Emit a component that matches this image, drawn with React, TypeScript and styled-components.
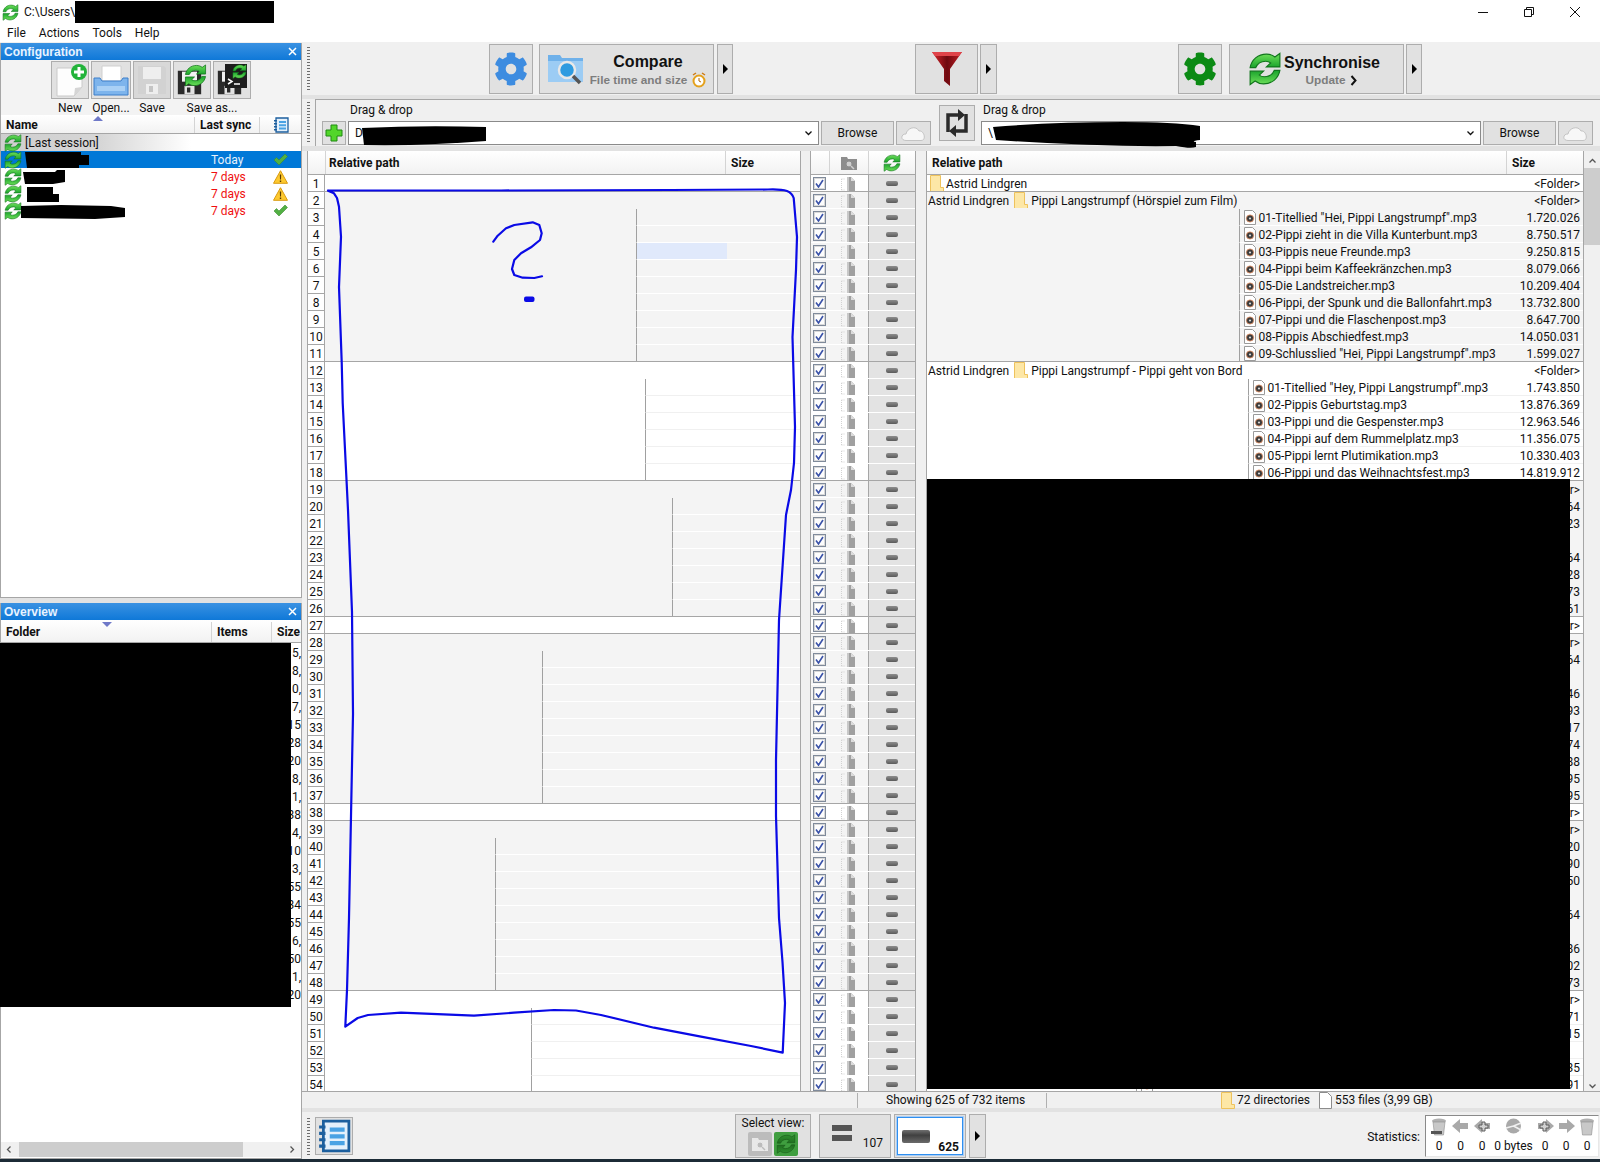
import React, { useId } from 'react';
import styled, { createGlobalStyle } from 'styled-components';
import { FaCog } from 'react-icons/fa';

const GlobalStyle = createGlobalStyle`
  * { box-sizing: border-box; }
  html, body { margin: 0; padding: 0; background: #f0f0f0; }
  body { font-family: Roboto, "Liberation Sans", sans-serif; font-size: 12px; color: #111; }
`;

const COLORS = {
  panel: '#f0f0f0',
  band: '#e2e2e2',
  line: '#a6a6a6',
  button: '#e1e1e1',
  buttonBorder: '#adadad',
  shaded: '#f4f4f4',
  blue: '#0078d7',
};

/* ---------- data ---------- */

const GROUPS = [
  { rows: 1 },
  { rows: 10, line: 637, rightLine: 1238.5 },
  { rows: 7, line: 645.5, rightLine: 1247.5 },
  { rows: 8, line: 672.5 },
  { rows: 1 },
  { rows: 10, line: 543 },
  { rows: 1 },
  { rows: 10, line: 495.5 },
  { rows: 6, line: 532, rightLine: 1136 },
];

interface GridRowData {
  n: number;
  shaded: boolean;
  groupEnd: boolean;
  line?: number;
  rightLine?: number;
}

let counter = 0;
const ROWS: GridRowData[] = GROUPS.flatMap((group, groupIndex) =>
  Array.from({ length: group.rows }, (_, i) => {
    counter += 1;
    return {
      n: counter,
      shaded: groupIndex % 2 === 1,
      groupEnd: i === group.rows - 1,
      line: i === 0 ? undefined : group.line,
      rightLine: i === 0 ? undefined : group.rightLine,
    };
  }),
);

const FOLDER = '<Folder>';

const RIGHT_CONTENT: Record<number, { name?: string; size: string; parent?: string }> = {
  1: { name: 'Astrid Lindgren', size: FOLDER },
  2: { parent: 'Astrid Lindgren', name: 'Pippi Langstrumpf (Hörspiel zum Film)', size: FOLDER },
  3: { name: '01-Titellied "Hei, Pippi Langstrumpf".mp3', size: '1.720.026' },
  4: { name: '02-Pippi zieht in die Villa Kunterbunt.mp3', size: '8.750.517' },
  5: { name: '03-Pippis neue Freunde.mp3', size: '9.250.815' },
  6: { name: '04-Pippi beim Kaffeekränzchen.mp3', size: '8.079.066' },
  7: { name: '05-Die Landstreicher.mp3', size: '10.209.404' },
  8: { name: '06-Pippi, der Spunk und die Ballonfahrt.mp3', size: '13.732.800' },
  9: { name: '07-Pippi und die Flaschenpost.mp3', size: '8.647.700' },
  10: { name: '08-Pippis Abschiedfest.mp3', size: '14.050.031' },
  11: { name: '09-Schlusslied "Hei, Pippi Langstrumpf".mp3', size: '1.599.027' },
  12: { parent: 'Astrid Lindgren', name: 'Pippi Langstrumpf - Pippi geht von Bord', size: FOLDER },
  13: { name: '01-Titellied "Hey, Pippi Langstrumpf".mp3', size: '1.743.850' },
  14: { name: '02-Pippis Geburtstag.mp3', size: '13.876.369' },
  15: { name: '03-Pippi und die Gespenster.mp3', size: '12.963.546' },
  16: { name: '04-Pippi auf dem Rummelplatz.mp3', size: '11.356.075' },
  17: { name: '05-Pippi lernt Plutimikation.mp3', size: '10.330.403' },
  18: { name: '06-Pippi und das Weihnachtsfest.mp3', size: '14.819.912' },
};

const VISIBLE_SIZES: Record<number, string> = {
  19: FOLDER, 20: '64', 21: '23', 23: '64', 24: '28', 25: '73', 26: '61', 27: FOLDER, 28: FOLDER,
  29: '64', 31: '46', 32: '93', 33: '17', 34: '74', 35: '88', 36: '95', 37: '95', 38: FOLDER,
  39: FOLDER, 40: '20', 41: '90', 42: '50', 44: '64', 46: '86', 47: '02', 48: '73', 49: FOLDER,
  50: '71', 51: '15', 53: '35', 54: '91',
};

const OVERVIEW_TAILS = ['5,', '8,', '0,', '7,', '15', '28', '20', '8,', '1,', '38', '4,', '10', '3,', '55', '34', '55', '6,', '50', '1,', '20'];

const CONFIG_ROWS = [
  { when: 'Today', selected: true, state: 'ok' },
  { when: '7 days', selected: false, state: 'warn' },
  { when: '7 days', selected: false, state: 'warn' },
  { when: '7 days', selected: false, state: 'ok' },
];

const STATS = [
  { kind: 'binBar', value: '0', width: 22 },
  { kind: 'left', value: '0', width: 21 },
  { kind: 'leftPlus', value: '0', width: 22 },
  { kind: 'pie', value: '0 bytes', width: 41 },
  { kind: 'rightPlus', value: '0', width: 22 },
  { kind: 'right', value: '0', width: 20 },
  { kind: 'bin', value: '0', width: 22 },
];

/* ---------- icons ---------- */

const SyncIcon = ({ size = 18, dark = false }: { size?: number; dark?: boolean }) => {
  const id = useId();
  const arrow = 'M1.500 11C2.500 5.500 7 1.500 13 1.500c2.500 0 4.500.8 6 2l3.500-2.500v9.500H13l3-2.800c-1-.8-2.300-1.200-3.500-1.200-3.500 0-6 2-7 4.500z';
  return (
    <svg width={size} height={size} viewBox="0 0 24 24">
      <defs>
        <linearGradient id={id} x1="0" y1="0" x2="0" y2="1">
          <stop offset="0" stopColor={dark ? '#2f8f2f' : '#6fe05a'} />
          <stop offset="1" stopColor={dark ? '#1f6f1f' : '#19a32c'} />
        </linearGradient>
      </defs>
      <g fill={`url(#${id})`} stroke={dark ? '#1a5c1a' : '#11761c'} strokeWidth=".8">
        <path d={arrow} />
        <path d={arrow} transform="rotate(180 12 12)" />
      </g>
    </svg>
  );
};

const FolderIcon = () => (
  <svg width="14" height="17" viewBox="0 0 14 17">
    <path d="M.5.5h10v12h3v4H.5z" fill="#fde7a6" stroke="#eec25c" />
  </svg>
);

const PlainFileIcon = () => (
  <svg width="13" height="17" viewBox="0 0 13 17">
    <path d="M.5.5h8l4 4v12H.5z" fill="#fff" stroke="#8c8c8c" />
  </svg>
);

const Mp3Icon = () => (
  <svg width="12" height="15" viewBox="0 0 12 15">
    <path d="M.5.5h8l3 3v11H.5z" fill="#fff" stroke="#9a9a9a" />
    <circle cx="6" cy="8.500" r="3.600" fill="#3c3c3c" stroke="#e08a5c" strokeWidth=".8" />
    <circle cx="6" cy="8.500" r="1.100" fill="#d9d9d9" />
  </svg>
);

const TickIcon = () => (
  <svg width="15" height="13" viewBox="0 0 15 13">
    <path d="M1 7l2.500-2.500L6 7l6-6 2.500 2.500L6 12z" fill="#52b043" stroke="#3a8a30" strokeWidth=".6" />
  </svg>
);

const WarnIcon = () => (
  <svg width="15" height="14" viewBox="0 0 15 14">
    <path d="M7.500.7L14.500 13.300H.5z" fill="#fdc92f" stroke="#d99a10" />
    <path d="M6.800 4.500h1.400L8 9.500H7zM6.800 10.500h1.400v1.400H6.800z" fill="#5a3a00" />
  </svg>
);

const CloudIcon = () => (
  <svg width="26" height="18" viewBox="0 0 26 18">
    <path d="M5 16.500c-6 0-5-7 0-6.500C6 4 15 1 18 7c5-1 8 9.500 2 9.500z" fill="#f7f7f7" stroke="#c4c4c4" />
  </svg>
);

const FunnelIcon = () => {
  const id = useId();
  return (
    <svg width="32" height="36" viewBox="0 0 32 36">
      <defs>
        <linearGradient id={id} x1="0" y1="0" x2="1" y2="0">
          <stop offset="0" stopColor="#d8262c" />
          <stop offset=".5" stopColor="#6e0a10" />
          <stop offset="1" stopColor="#c51c24" />
        </linearGradient>
      </defs>
      <path d="M1 1h30L19 18v17l-6-5V18z" fill={`url(#${id})`} />
      <path d="M1 1h30l-3 4H4z" fill="#e0444a" />
    </svg>
  );
};

const CompareFolderIcon = () => (
  <svg width="38" height="38" viewBox="0 0 38 38">
    <path d="M1 5h12l2 3h21v24H1z" fill="#6fb1ea" />
    <path d="M1 11h35v21H1z" fill="#9cccf4" />
    <circle cx="20" cy="20" r="8" fill="#2f9be0" stroke="#e8e8e8" strokeWidth="2.500" />
    <path d="M26 26l7 7" stroke="#555" strokeWidth="3.500" />
  </svg>
);

const ClockIcon = () => (
  <svg width="14" height="16" viewBox="0 0 14 16">
    <circle cx="7" cy="9" r="5.500" fill="#fff" stroke="#e4a11c" strokeWidth="2" />
    <path d="M7 6v3l2 1" stroke="#b36a00" fill="none" />
    <path d="M1 3l3-2M13 3l-3-2" stroke="#d07a10" strokeWidth="1.500" />
  </svg>
);

const PlusIcon = () => (
  <svg width="18" height="18" viewBox="0 0 18 18">
    <path d="M6 1h6v5h5v6h-5v5H6v-5H1V6h5z" fill="#52d62a" stroke="#1f8a10" />
  </svg>
);

const SwapIcon = () => (
  <svg width="24" height="30" viewBox="0 0 24 30">
    <path d="M3 24V7h11M21 6v17H10" fill="none" stroke="#2a2a2a" strokeWidth="3.500" />
    <path d="M13 1l7 6-7 6zM11 17l-7 6 7 6z" fill="#2a2a2a" />
  </svg>
);

const NewIcon = () => (
  <svg width="36" height="36" viewBox="0 0 36 36">
    <path d="M5 6h25v19l-8 9H5z" fill="#fdfdfd" stroke="#c9c9c9" />
    <path d="M22 34l1-8 7-1z" fill="#d5d5d5" />
    <circle cx="27" cy="10" r="8" fill="#22b33a" />
    <path d="M25.500 5h3v3.500H32v3h-3.500V15h-3v-3.500H22v-3h3.500z" fill="#fff" />
  </svg>
);

const OpenIcon = () => (
  <svg width="36" height="36" viewBox="0 0 36 36">
    <path d="M9 4h19v15H9z" fill="#fff" stroke="#cfcfcf" />
    <path d="M1 16h6l2 3h19l2-3h5v17H1z" fill="#7db4ec" stroke="#3d7fca" />
    <path d="M4 24h28v5H4z" fill="#a9d0f5" />
  </svg>
);

const DiskIcon = ({ muted = false, size = 30 }: { muted?: boolean; size?: number }) => (
  <svg width={size} height={size} viewBox="0 0 30 30">
    <path d="M1 1h26l2 2v26H1z" fill={muted ? '#d2d2d2' : '#2a2a2a'} />
    <path d="M6 2h18v12H6z" fill={muted ? '#eeeeee' : '#f2f2f2'} />
    <path d="M9 19h12v10H9z" fill={muted ? '#eeeeee' : '#e2e2e2'} />
    <path d="M12 21h4v6h-4z" fill={muted ? '#c4c4c4' : '#2a2a2a'} />
  </svg>
);

const ShellIcon = () => (
  <svg width="22" height="24" viewBox="0 0 22 24">
    <path d="M0 0h22v24H0z" fill="#1d1d1d" />
    <path d="M3 15l4 2.500L3 20" fill="none" stroke="#fff" strokeWidth="1.500" />
    <path d="M9 20h6" stroke="#fff" strokeWidth="1.500" />
  </svg>
);

const ListBookIcon = ({ size = 16 }: { size?: number }) => (
  <svg width={size} height={size} viewBox="0 0 16 16">
    <path d="M3 1h12v14H3z" fill="#e4f0fb" stroke="#1c5f9e" strokeWidth="1.300" />
    <path d="M6 4h7v2H6zM6 7.200h7v2H6zM6 10.400h7v2H6z" fill="#49a2e4" />
    <path d="M1 3h3v1.500H1zM1 6h3v1.500H1zM1 9h3v1.500H1zM1 12h3v1.500H1z" fill="#1c5f9e" />
  </svg>
);

const ScanFolderIcon = ({ fill = '#8d8d8d', glass = '#cfcfcf' }: { fill?: string; glass?: string }) => (
  <svg width="16" height="14" viewBox="0 0 16 14">
    <path d="M0 1h6l1 2h9v11H0z" fill={fill} />
    <circle cx="8" cy="8" r="3" fill={glass} stroke={fill} />
    <path d="M10 10l3 3" stroke={glass} strokeWidth="1.500" />
  </svg>
);

const GhostFileIcon = () => (
  <svg width="16" height="15" viewBox="0 0 16 15">
    <path d="M.5 3h3M.5 3v11M.5 14h3" stroke="#d2d2d2" strokeDasharray="1 1" fill="none" />
    <path d="M6 1h4l4 4v10H6z" fill="#a0a0a0" />
    <path d="M10 1l4 4h-4z" fill="#dcdcdc" />
    <path d="M6 1h2v14H6z" fill="#c8c8c8" />
  </svg>
);

const StatIcon = ({ kind }: { kind: string }) => {
  const gray = '#8e8e8e';
  switch (kind) {
    case 'bin':
    case 'binBar':
      return (
        <svg width="16" height="18" viewBox="0 0 16 18">
          <ellipse cx="8" cy="3" rx="7" ry="2.500" fill="#b0b0b0" />
          <path d="M2 4h12l-1.500 13h-9z" fill="#c8c8c8" stroke={gray} strokeWidth=".6" />
          <path d="M0 13h11v3H0z" fill={kind === 'binBar' ? '#555' : 'none'} />
        </svg>
      );
    case 'left':
    case 'leftPlus':
      return (
        <svg width="17" height="16" viewBox="0 0 17 16">
          <path d="M0 8l8-7v4h8v6H8v4z" fill="#a9a9a9" />
          {kind === 'leftPlus' && <path d="M5 7h3V4h3v3h3v3h-3v3H8v-3H5z" fill="#d2d2d2" stroke="#5c5c5c" />}
        </svg>
      );
    case 'right':
    case 'rightPlus':
      return (
        <svg width="17" height="16" viewBox="0 0 17 16">
          <path d="M17 8L9 1v4H1v6h8v4z" fill="#a9a9a9" />
          {kind === 'rightPlus' && <path d="M3 7h3V4h3v3h3v3H9v3H6v-3H3z" fill="#d2d2d2" stroke="#5c5c5c" />}
        </svg>
      );
    default:
      return (
        <svg width="17" height="16" viewBox="0 0 17 16">
          <circle cx="8.500" cy="8" r="7.500" fill="#a9a9a9" />
          <path d="M8.500 8L16 5M8.500 8L16 12M8.500 8L1 10" stroke="#f0f0f0" strokeWidth="1.500" />
        </svg>
      );
  }
};

/* ---------- layout ---------- */

const Page = styled.div`
  width: 1600px;
  height: 1162px;
  display: flex;
  flex-direction: column;
  overflow: hidden;
  background: #fff;
`;

const TitleBar = styled.div`
  height: 24px;
  display: flex;
  align-items: center;
  padding: 0 2px;
  gap: 5px;
  background: #fff;
`;

const TitleRedaction = styled.div`
  width: 199px;
  height: 22px;
  margin-left: -12px;
  background: #000;
`;

const WindowControls = styled.div`
  margin-left: auto;
  display: flex;
`;

const WindowControl = styled.div`
  width: 46px;
  height: 24px;
  display: flex;
  align-items: center;
  justify-content: center;
`;

const MenuBar = styled.div`
  height: 18px;
  display: flex;
  align-items: center;
  padding-left: 7px;
  gap: 13px;
  background: #fff;
`;

const Workspace = styled.div`
  height: 1117px;
  display: flex;
  background: ${COLORS.panel};
  border-top: 1px solid ${COLORS.panel};
`;

const Sidebar = styled.div`
  width: 302px;
  display: flex;
  flex-direction: column;
  background: ${COLORS.band};
`;

const ConfigPanel = styled.section`
  height: 555px;
  display: flex;
  flex-direction: column;
  background: #fff;
  border: 1px solid ${COLORS.line};
  border-top: 0;
`;

const OverviewPanel = styled(ConfigPanel)`
  height: 556px;
  margin-top: 5px;
`;

const DockTitle = styled.div`
  flex: none;
  height: 17px;
  display: flex;
  align-items: center;
  justify-content: space-between;
  padding: 0 4px 0 3px;
  background: linear-gradient(#3a92e2, #0f78d8);
  color: #e8f3ff;
  font-family: "Liberation Sans", sans-serif;
  font-weight: 700;
  font-size: 12px;
`;

const ConfigButtons = styled.div`
  flex: none;
  height: 55px;
  padding: 1px 0 0 50px;
  display: grid;
  grid-template-columns: 38px 40px 38px 38px 38px;
  grid-template-rows: 38px 1fr;
  column-gap: 2px;
  background: #f3f3f3;
  justify-items: center;
  align-items: center;
`;

const ConfigButton = styled.div<{ $muted?: boolean }>`
  position: relative;
  width: 100%;
  height: 38px;
  display: flex;
  align-items: center;
  justify-content: center;
  background: ${(p) => (p.$muted ? '#d8d8d8' : COLORS.button)};
  border: 1px solid ${COLORS.buttonBorder};
`;

const DiskBase = styled.div`
  position: absolute;
  left: 3px;
  bottom: 3px;
  display: flex;
`;

const DiskBadge = styled.div`
  position: absolute;
  right: 3px;
  top: 2px;
  display: flex;
`;

const ConfigLabel = styled.span<{ $wide?: boolean }>`
  grid-column: ${(p) => (p.$wide ? 'span 2' : 'auto')};
  padding-top: 2px;
  font-size: 12px;
  white-space: nowrap;
`;

const ColumnHeaderRow = styled.div<{ $height: number; $top?: number }>`
  position: relative;
  flex: none;
  height: ${(p) => p.$height}px;
  padding-top: ${(p) => p.$top ?? 0}px;
  display: flex;
  background: linear-gradient(#fff, #f2f2f2);
  border-bottom: 1px solid ${COLORS.line};
`;

const ColumnHead = styled.div<{ $width?: number; $pad?: number; $center?: boolean }>`
  ${(p) => (p.$width ? `width: ${p.$width}px; flex: none;` : 'flex: 1;')}
  display: flex;
  align-items: center;
  justify-content: ${(p) => (p.$center ? 'center' : 'flex-start')};
  padding-left: ${(p) => p.$pad ?? 5}px;
  font-weight: 700;
  font-size: 12px;
  white-space: nowrap;
  overflow: hidden;
  & + & {
    border-left: 1px solid #d4d4d4;
  }
`;

const SortMark = styled.span<{ $left: number }>`
  position: absolute;
  top: 2px;
  left: ${(p) => p.$left}px;
  border-left: 5px solid transparent;
  border-right: 5px solid transparent;
  border-top: 5px solid #6f79c8;
`;

const SortMarkUp = styled(SortMark)`
  top: 1px;
  border-top: 0;
  border-bottom: 5px solid #6f79c8;
`;

const ConfigList = styled.div`
  position: relative;
  flex: 1;
`;

const ConfigRow = styled.div<{ $selected?: boolean; $session?: boolean }>`
  height: 17px;
  display: flex;
  align-items: center;
  padding-left: 3px;
  gap: 3px;
  background: ${(p) =>
    p.$selected ? COLORS.blue : p.$session ? 'linear-gradient(90deg, #cfcfcf 0, #d6d6d6 100px, #fff 190px)' : 'transparent'};
`;

const ConfigName = styled.span`
  flex: 1;
`;

const ConfigWhen = styled.span<{ $selected?: boolean }>`
  width: 56px;
  color: ${(p) => (p.$selected ? '#e8f2fb' : '#f01010')};
`;

const ConfigState = styled.span`
  width: 20px;
  margin-right: 11px;
  display: flex;
  justify-content: center;
`;

const Strokes = styled.svg`
  position: absolute;
  left: 0;
  top: 0;
  overflow: visible;
  pointer-events: none;
`;

const OverviewBody = styled.div`
  position: relative;
  flex: 1;
  padding-top: 1px;
`;

const OverviewTail = styled.div`
  height: 18px;
  line-height: 18px;
  text-align: right;
`;

const Redaction = styled.div`
  position: absolute;
  left: -1px;
  top: 0;
  width: 291px;
  height: 364px;
  background: #000;
`;

const HScroll = styled.div`
  flex: none;
  height: 15px;
  margin-bottom: 1px;
  display: flex;
  align-items: center;
  background: ${COLORS.panel};
  color: #555;
`;

const HScrollThumb = styled.div`
  width: 224px;
  height: 15px;
  margin: 0 auto 0 3px;
  background: #cdcdcd;
`;

const ScrollArrow = styled.svg`
  flex: none;
  margin: 0 3px;
`;

const RightGap = styled.span`
  width: 1px;
`;

const Main = styled.div`
  flex: 1;
  min-width: 0;
  display: flex;
  flex-direction: column;
  background: ${COLORS.band};
`;

const TopToolbar = styled.div`
  height: 52px;
  flex: none;
  display: flex;
  align-items: flex-start;
  padding-top: 1px;
  background: ${COLORS.panel};
`;

const Gripper = styled.div<{ $height: number; $after: number }>`
  flex: none;
  width: 3px;
  height: ${(p) => p.$height}px;
  margin: 3px ${(p) => p.$after}px 0 5px;
  background-image: repeating-linear-gradient(#6c6c6c 0 1px, transparent 1px 3px);
`;

const ToolButton = styled.div<{ $width: number; $after?: number }>`
  flex: none;
  width: ${(p) => p.$width}px;
  height: 50px;
  margin-right: ${(p) => p.$after ?? 0}px;
  display: flex;
  align-items: center;
  justify-content: center;
  background: ${COLORS.button};
  border: 1px solid ${COLORS.buttonBorder};
`;

const WideToolButton = styled(ToolButton)`
  justify-content: flex-start;
`;

const Caret = styled.span`
  border-top: 5px solid transparent;
  border-bottom: 5px solid transparent;
  border-left: 5px solid #000;
`;

const ToolIconSlot = styled.div<{ $left: number; $right: number }>`
  margin: 0 ${(p) => p.$right}px 0 ${(p) => p.$left}px;
  display: flex;
`;

const ToolText = styled.div<{ $width: number }>`
  flex: none;
  width: ${(p) => p.$width}px;
  display: flex;
  flex-direction: column;
  align-items: center;
  font-family: "Liberation Sans", sans-serif;
  font-weight: 700;
`;

const ToolTitle = styled.span`
  font-size: 16px;
  line-height: 21px;
  padding-top: 1px;
`;

const ToolSub = styled.span`
  display: flex;
  align-items: center;
  gap: 5px;
  font-size: 11.800px;
  line-height: 15px;
  color: #7d7d7d;
`;

const AddressRow = styled.div`
  height: 47px;
  flex: none;
  margin-top: 4px;
  display: flex;
  background: ${COLORS.panel};
`;

const AddressPanel = styled.div`
  flex: 1;
  display: flex;
  align-items: flex-start;
  padding-left: 6px;
  border-left: 1px solid ${COLORS.line};
  border-top: 1px solid ${COLORS.line};
`;

const AddressSide = styled.div<{ $width: number }>`
  width: ${(p) => p.$width}px;
  flex: none;
`;

const AddressLabel = styled.div<{ $pad: number }>`
  height: 21px;
  line-height: 20px;
  padding-left: ${(p) => p.$pad}px;
`;

const AddressControls = styled.div`
  height: 24px;
  display: flex;
  gap: 2px;
`;

const SmallButton = styled.div<{ $width: number }>`
  flex: none;
  width: ${(p) => p.$width}px;
  height: 24px;
  display: flex;
  align-items: center;
  justify-content: center;
  background: ${COLORS.button};
  border: 1px solid ${COLORS.buttonBorder};
`;

const SwapButton = styled(ToolButton)`
  height: 36px;
  margin: 5px 6px 0 8px;
`;

const Combo = styled.div`
  position: relative;
  flex: 1;
  display: flex;
  align-items: center;
  justify-content: space-between;
  padding: 0 2px 0 6px;
  background: #fff;
  border: 1px solid #8a8a8a;
`;

const GridArea = styled.div`
  height: 941px;
  flex: none;
  margin-top: 5px;
  padding-left: 5px;
  display: flex;
  background: ${COLORS.panel};
  border-bottom: 1px solid ${COLORS.line};
`;

const Grid = styled.div<{ $width: number }>`
  position: relative;
  flex: none;
  width: ${(p) => p.$width}px;
  display: flex;
  flex-direction: column;
  overflow: hidden;
  background: #fff;
  border-left: 1px solid ${COLORS.line};
  border-right: 1px solid ${COLORS.line};
`;

const GridSash = styled.div<{ $width: number }>`
  flex: none;
  width: ${(p) => p.$width}px;
`;

const GridRow = styled.div<{ $shaded: boolean; $end: boolean }>`
  flex: none;
  height: 17px;
  display: flex;
  background: ${(p) => (p.$shaded ? COLORS.shaded : '#fff')};
  border-bottom: 1px solid ${(p) => (p.$end ? COLORS.line : 'transparent')};
`;

const RowLabel = styled.div`
  flex: none;
  width: 17px;
  height: 17px;
  line-height: 18px;
  text-align: center;
  background: #fff;
  border-right: 1px solid ${COLORS.line};
  border-bottom: 1px solid ${COLORS.line};
`;

const Indent = styled.div<{ $width: number }>`
  flex: none;
  width: ${(p) => p.$width}px;
`;

const FileArea = styled.div<{ $shaded: boolean; $end: boolean }>`
  flex: 1;
  min-width: 0;
  display: flex;
  align-items: center;
  border-left: 1px solid #a0a0a0;
  border-bottom: ${(p) => (p.$end ? 0 : `1px solid ${p.$shaded ? '#fff' : COLORS.panel}`)};
  height: ${(p) => (p.$end ? '16px' : '17px')};
`;

const Highlight = styled.div`
  align-self: stretch;
  width: 90px;
  background: #e0e9fb;
`;

const MiddleRow = styled.div<{ $shaded: boolean; $end: boolean }>`
  flex: none;
  height: 17px;
  display: grid;
  grid-template-columns: 18px 39px 1fr;
  background: ${(p) => (p.$shaded ? COLORS.shaded : '#fff')};
  border-bottom: 1px solid ${(p) => (p.$end ? COLORS.line : '#fff')};
`;

const MiddleCell = styled.div<{ $sync?: boolean; $check?: boolean }>`
  display: flex;
  align-items: center;
  justify-content: center;
  padding-right: ${(p) => (p.$check ? '2px' : '0')};
  ${(p) => p.$sync && `background: #e3e3e3; border-left: 1px solid ${COLORS.line};`}
`;

const CheckBox = styled.span`
  width: 13px;
  height: 13px;
  display: flex;
  align-items: center;
  justify-content: center;
  background: #fdfdfd;
  border: 1px solid #7f8a9a;
  box-shadow: inset 0 0 0 1px #d8d8d8;
`;

const EqualPill = styled.span`
  width: 12px;
  height: 5px;
  border-radius: 2px;
  background: linear-gradient(#8e8e8e, #5a5a5a);
`;

const RightName = styled.div<{ $pad: number }>`
  flex: 1;
  min-width: 0;
  height: 16px;
  display: flex;
  align-items: center;
  gap: 2px;
  padding-left: ${(p) => p.$pad}px;
  white-space: nowrap;
  overflow: hidden;
`;

const RightLabel = styled.span<{ $left?: number; $right?: number }>`
  padding-top: 2px;
  margin-left: ${(p) => p.$left ?? 0}px;
  margin-right: ${(p) => p.$right ?? 0}px;
`;

const RightSize = styled.div`
  flex: none;
  width: 76px;
  height: 16px;
  line-height: 18px;
  padding-right: 3px;
  text-align: right;
  white-space: nowrap;
`;

const BlackOut = styled.div`
  position: absolute;
  left: 0;
  top: 328px;
  width: 643px;
  height: 610px;
  background: #000;
`;

const VScroll = styled.div`
  flex: none;
  width: 16px;
  display: flex;
  flex-direction: column;
  align-items: center;
  padding-top: 5px;
  color: #555;
`;

const VScrollThumb = styled.div`
  width: 16px;
  height: 77px;
  margin: 3px 0 auto;
  background: #cdcdcd;
`;

const StatusBar = styled.div`
  height: 16px;
  flex: none;
  display: flex;
  align-items: center;
  padding-left: 5px;
  background: ${COLORS.panel};
`;

const StatusCell = styled.div<{ $width: number; $pad?: number }>`
  flex: none;
  width: ${(p) => p.$width}px;
  height: 15px;
  display: flex;
  align-items: center;
  padding-left: ${(p) => p.$pad ?? 0}px;
  border-right: 1px solid #b0b0b0;
  white-space: nowrap;
`;

const StatusFree = styled.div`
  display: flex;
  align-items: center;
  gap: 2px;
  margin-left: 174px;
  white-space: nowrap;
`;

const StatusFile = styled.span`
  display: flex;
  align-items: center;
  gap: 3px;
  margin-left: 7px;
`;

const BottomBar = styled.div`
  height: 47px;
  flex: none;
  margin-top: 4px;
  display: flex;
  align-items: center;
  background: ${COLORS.panel};
`;

const ListButton = styled.div`
  flex: none;
  width: 38px;
  height: 38px;
  display: flex;
  align-items: center;
  justify-content: center;
  background: ${COLORS.button};
  border: 1px solid ${COLORS.buttonBorder};
`;

const ViewBox = styled.div`
  flex: none;
  width: 76px;
  height: 44px;
  margin-left: 382px;
  margin-right: 8px;
  display: flex;
  flex-direction: column;
  align-items: center;
  background: ${COLORS.button};
  border: 1px solid ${COLORS.buttonBorder};
`;

const ViewLabel = styled.div`
  line-height: 17px;
`;

const ViewIcons = styled.div`
  display: flex;
  gap: 2px;
`;

const ViewIcon = styled.div<{ $green?: boolean }>`
  width: 24px;
  height: 24px;
  display: flex;
  align-items: center;
  justify-content: center;
  border-radius: 2px;
  background: ${(p) => (p.$green ? '#3f9e3f' : '#bcbcbc')};
`;

const CountButton = styled.div<{ $active?: boolean }>`
  flex: none;
  width: 72px;
  height: 44px;
  margin-right: 3px;
  padding: ${(p) => (p.$active ? '2px' : '0')};
  background: ${COLORS.button};
  border: 1px solid ${COLORS.buttonBorder};
`;

const CountInner = styled.div<{ $active?: boolean }>`
  height: 100%;
  display: flex;
  align-items: flex-start;
  justify-content: space-between;
  padding: ${(p) => (p.$active ? '12px 3px 0 4px' : '10px 7px 0 12px')};
  background: ${(p) => (p.$active ? '#fff' : 'transparent')};
  border: ${(p) => (p.$active ? '1px solid #2f8ff0' : '0')};
  box-shadow: ${(p) => (p.$active ? '0 0 0 1px #a8cdf5' : 'none')};
`;

const CountValue = styled.span<{ $active?: boolean }>`
  align-self: flex-end;
  margin-bottom: ${(p) => (p.$active ? '0' : '7px')};
  font-weight: ${(p) => (p.$active ? 700 : 400)};
`;

const DoubleBars = styled.span`
  display: flex;
  flex-direction: column;
  gap: 4px;
`;

const Bar = styled.span`
  width: 20px;
  height: 6px;
  background: #555;
`;

const BigPill = styled.span`
  width: 28px;
  height: 13px;
  border-radius: 2px;
  background: linear-gradient(#707070, #404040 40%, #6a6a6a);
`;

const CaretButton = styled(ToolButton)`
  height: 44px;
`;

const StatsLabel = styled.div`
  margin-left: auto;
  margin-right: 5px;
  padding-top: 2px;
`;

const StatsBox = styled.div`
  flex: none;
  width: 174px;
  height: 42px;
  margin-right: 1px;
  padding: 2px 2px 0;
  display: flex;
  background: #fff;
  border: 1px solid #8a8a8a;
  border-bottom-color: #e8e8e8;
  border-right-color: #e8e8e8;
`;

const StatColumn = styled.div<{ $width: number }>`
  flex: none;
  width: ${(p) => p.$width}px;
  display: flex;
  flex-direction: column;
  align-items: center;
  justify-content: space-between;
  padding-bottom: 3px;
  white-space: nowrap;
`;

const Base = styled.div`
  height: 3px;
  flex: none;
  background: #1c2b36;
`;

const CloseX = () => (
  <svg width="9" height="9" viewBox="0 0 9 9">
    <path d="M1 1l7 7M8 1L1 8" stroke="#fff" strokeWidth="1.500" />
  </svg>
);

const Chevron = ({ rotate }: { rotate: number }) => (
  <ScrollArrow width="9" height="9" viewBox="0 0 9 9">
    <path d="M1.500 6.500l3-3 3 3" fill="none" stroke="currentColor" strokeWidth="1.300" transform={`rotate(${rotate} 4.500 4.500)`} />
  </ScrollArrow>
);

const CheckMark = () => (
  <svg width="9" height="9" viewBox="0 0 9 9">
    <path d="M1 4.500L3.500 8 8 1" fill="none" stroke="#3a52a8" strokeWidth="1.600" />
  </svg>
);

const DRAWN_BORDER =
  'M327 190.500 L500 190.500 L670 190 L767 189.500 Q780 189 786 191 Q791 193 792.700 198 L796 237 L795 270 L791.500 337 L794 427 L793 463 L790 490 L785 515 L778 620 L775 760 L775 816 L778 918 L781.500 962 L784 1003 L781.700 1052.700 L750 1046 L700 1036.700 L653 1027.700 L600 1015 L575 1010.500 L553 1010 L513 1012.700 L473 1015.700 L400 1012.700 L367 1015 L356.700 1018 L344.300 1026.700 L346 990 L348 918 L352 714 L351 612 L347 510 L341.700 403 L340.700 361.700 L338 287 L340 236.700 L338 206.700 L336 198 L333 193.300 L327 190.700';

const DRAWN_QUESTION =
  'M492.300 241.700 L496.700 235.700 L505 228.300 L513.300 225 L531.700 222.300 L538.300 225 L540.700 233.300 L539 240 L530 247.300 L520 253.300 L513.300 260 L511 269 L513.300 275 L521.700 277.700 L533.300 278 L541 276.300';

export default function App() {
  return (
    <Page>
      <GlobalStyle />
      <TitleBar>
        <SyncIcon size={17} />
        <span>C:\Users\T</span>
        <TitleRedaction />
        <WindowControls>
          <WindowControl>
            <svg width="10" height="10" viewBox="0 0 10 10"><path d="M0 5.500h10" stroke="#111" /></svg>
          </WindowControl>
          <WindowControl>
            <svg width="10" height="10" viewBox="0 0 10 10"><path d="M.5 2.500h7v7h-7zM2.500 2.500v-2h7v7h-2" fill="none" stroke="#111" /></svg>
          </WindowControl>
          <WindowControl>
            <svg width="10" height="10" viewBox="0 0 10 10"><path d="M0 0l10 10M10 0L0 10" stroke="#111" /></svg>
          </WindowControl>
        </WindowControls>
      </TitleBar>
      <MenuBar>
        <span>File</span>
        <span>Actions</span>
        <span>Tools</span>
        <span>Help</span>
      </MenuBar>
      <Workspace>
        <Sidebar>
          <ConfigPanel>
            <DockTitle>
              Configuration
              <CloseX />
            </DockTitle>
            <ConfigButtons>
              <ConfigButton><NewIcon /></ConfigButton>
              <ConfigButton><OpenIcon /></ConfigButton>
              <ConfigButton $muted><DiskIcon muted /></ConfigButton>
              <ConfigButton>
                <DiskBase><DiskIcon size={25} /></DiskBase>
                <DiskBadge><SyncIcon size={23} /></DiskBadge>
              </ConfigButton>
              <ConfigButton>
                <DiskBase><DiskIcon size={25} /></DiskBase>
                <DiskBadge><ShellIcon /></DiskBadge>
                <DiskBadge><SyncIcon size={15} /></DiskBadge>
              </ConfigButton>
              <ConfigLabel>New</ConfigLabel>
              <ConfigLabel>Open...</ConfigLabel>
              <ConfigLabel>Save</ConfigLabel>
              <ConfigLabel $wide>Save as...</ConfigLabel>
            </ConfigButtons>
            <ColumnHeaderRow $height={19} $top={2}>
              <SortMarkUp $left={92} />
              <ColumnHead>Name</ColumnHead>
              <ColumnHead $width={65}>Last sync</ColumnHead>
              <ColumnHead $width={42} $pad={0} $center>
                <ListBookIcon />
              </ColumnHead>
            </ColumnHeaderRow>
            <ConfigList>
              <ConfigRow $session>
                <SyncIcon />
                <ConfigName>[Last session]</ConfigName>
              </ConfigRow>
              {CONFIG_ROWS.map((row, index) => (
                <ConfigRow key={index} $selected={row.selected}>
                  <SyncIcon />
                  <ConfigName />
                  <ConfigWhen $selected={row.selected}>{row.when}</ConfigWhen>
                  <ConfigState>{row.state === 'ok' ? <TickIcon /> : <WarnIcon />}</ConfigState>
                </ConfigRow>
              ))}
              <Strokes width="300" height="85" viewBox="0 134 300 85">
                <path d="M24 152h56v3h8v10H78v3H26zM22 172h32l2-2h8v12l-12 2H24zM26 187h26v7h6v8H26zM20 206l40-1 50 1 14 2v9l-30 2-74-1z" fill="#000" />
              </Strokes>
            </ConfigList>
          </ConfigPanel>
          <OverviewPanel>
            <DockTitle>
              Overview
              <CloseX />
            </DockTitle>
            <ColumnHeaderRow $height={23} $top={2}>
              <SortMark $left={101} />
              <ColumnHead>Folder</ColumnHead>
              <ColumnHead $width={60}>Items</ColumnHead>
              <ColumnHead $width={30}>Size</ColumnHead>
            </ColumnHeaderRow>
            <OverviewBody>
              {OVERVIEW_TAILS.map((tail, index) => (
                <OverviewTail key={index}>{tail}</OverviewTail>
              ))}
              <Redaction />
            </OverviewBody>
            <HScroll>
              <Chevron rotate={-90} />
              <HScrollThumb />
              <Chevron rotate={90} />
              <RightGap />
            </HScroll>
          </OverviewPanel>
        </Sidebar>
        <Main>
          <TopToolbar>
            <Gripper $height={44} $after={179} />
            <ToolButton $width={44} $after={6}>
              <FaCog size={34} color="#3d8ce0" />
            </ToolButton>
            <WideToolButton $width={175} $after={3}>
              <ToolIconSlot $left={7} $right={4}><CompareFolderIcon /></ToolIconSlot>
              <ToolText $width={118}>
                <ToolTitle>Compare</ToolTitle>
                <ToolSub>
                  File time and size
                  <ClockIcon />
                </ToolSub>
              </ToolText>
            </WideToolButton>
            <ToolButton $width={16} $after={182}><Caret /></ToolButton>
            <ToolButton $width={63} $after={2}><FunnelIcon /></ToolButton>
            <ToolButton $width={17} $after={181}><Caret /></ToolButton>
            <ToolButton $width={44} $after={7}>
              <FaCog size={34} color="#0b8a14" />
            </ToolButton>
            <WideToolButton $width={175} $after={2}>
              <ToolIconSlot $left={18} $right={2}><SyncIcon size={34} /></ToolIconSlot>
              <ToolText $width={96}>
                <ToolTitle>Synchronise</ToolTitle>
                <ToolSub>
                  Update
                  <svg width="8" height="11" viewBox="0 0 8 11"><path d="M1.500 1l4 4.500-4 4.500" fill="none" stroke="#111" strokeWidth="2" /></svg>
                </ToolSub>
              </ToolText>
            </WideToolButton>
            <ToolButton $width={16}><Caret /></ToolButton>
          </TopToolbar>
          <AddressRow>
            <Gripper $height={40} $after={5} />
            <AddressPanel>
              <AddressSide $width={609}>
                <AddressLabel $pad={28}>Drag &amp; drop</AddressLabel>
                <AddressControls>
                  <SmallButton $width={24}><PlusIcon /></SmallButton>
                  <Combo>
                    D:
                    <Chevron rotate={180} />
                    <Strokes width="471" height="24" viewBox="348 121 471 24">
                      <path d="M361 127q60-3 124-1v14q-60 5-122 4z" fill="#000" />
                    </Strokes>
                  </Combo>
                  <SmallButton $width={73}>Browse</SmallButton>
                  <SmallButton $width={35}><CloudIcon /></SmallButton>
                </AddressControls>
              </AddressSide>
              <SwapButton $width={36}><SwapIcon /></SwapButton>
              <AddressSide $width={612}>
                <AddressLabel $pad={2}>Drag &amp; drop</AddressLabel>
                <AddressControls>
                  <Combo>
                    \
                    <Chevron rotate={180} />
                    <Strokes width="499" height="24" viewBox="981 121 499 24">
                      <path d="M992 126q60-5 130-5 50 0 77 4v14q-10 1-4 2v5q-5 2-20-1-80 1-180-6z" fill="#000" />
                    </Strokes>
                  </Combo>
                  <SmallButton $width={73}>Browse</SmallButton>
                  <SmallButton $width={35}><CloudIcon /></SmallButton>
                </AddressControls>
              </AddressSide>
            </AddressPanel>
          </AddressRow>
          <GridArea>
            <Grid $width={494}>
              <ColumnHeaderRow $height={24}>
                <ColumnHead $width={17} />
                <ColumnHead $pad={3}>Relative path</ColumnHead>
                <ColumnHead $width={75}>Size</ColumnHead>
              </ColumnHeaderRow>
              {ROWS.map((row) => (
                <GridRow key={row.n} $shaded={row.shaded} $end={row.groupEnd}>
                  <RowLabel>{row.n}</RowLabel>
                  {row.line !== undefined && (
                    <>
                      <Indent $width={row.line - 326} />
                      <FileArea $shaded={row.shaded} $end={row.groupEnd}>
                        {row.n === 5 && <Highlight />}
                      </FileArea>
                    </>
                  )}
                </GridRow>
              ))}
              <Strokes width="494" height="941" viewBox="307 151 494 941">
                <g fill="none" stroke="#0a0ae6" strokeWidth="2.200" strokeLinejoin="round" strokeLinecap="round">
                  <path d={DRAWN_BORDER} />
                  <path d={DRAWN_QUESTION} />
                </g>
                <rect x="523" y="296.500" width="10.500" height="5.500" rx="2" fill="#0a0ae6" />
              </Strokes>
            </Grid>
            <GridSash $width={9} />
            <Grid $width={106}>
              <ColumnHeaderRow $height={24}>
                <ColumnHead $width={18} $pad={0} />
                <ColumnHead $width={39} $pad={0} $center><ScanFolderIcon /></ColumnHead>
                <ColumnHead $pad={0} $center><SyncIcon /></ColumnHead>
              </ColumnHeaderRow>
              {ROWS.map((row) => (
                <MiddleRow key={row.n} $shaded={row.shaded} $end={row.groupEnd}>
                  <MiddleCell $check><CheckBox><CheckMark /></CheckBox></MiddleCell>
                  <MiddleCell><GhostFileIcon /></MiddleCell>
                  <MiddleCell $sync><EqualPill /></MiddleCell>
                </MiddleRow>
              ))}
            </Grid>
            <GridSash $width={10} />
            <Grid $width={658}>
              <ColumnHeaderRow $height={24}>
                <ColumnHead>Relative path</ColumnHead>
                <ColumnHead $width={77}>Size</ColumnHead>
              </ColumnHeaderRow>
              {ROWS.map((row) => {
                const content = RIGHT_CONTENT[row.n];
                const size = content ? content.size : VISIBLE_SIZES[row.n];
                if (row.rightLine !== undefined) {
                  return (
                    <GridRow key={row.n} $shaded={row.shaded} $end={row.groupEnd}>
                      <Indent $width={row.rightLine - 927} />
                      <FileArea $shaded={row.shaded} $end={row.groupEnd}>
                        <RightName $pad={4}>
                          <Mp3Icon />
                          <RightLabel $left={1}>{content?.name}</RightLabel>
                        </RightName>
                        <RightSize>{size}</RightSize>
                      </FileArea>
                    </GridRow>
                  );
                }
                return (
                  <GridRow key={row.n} $shaded={row.shaded} $end={row.groupEnd}>
                    <RightName $pad={content?.parent ? 1 : 3}>
                      {content?.parent && <RightLabel $right={3}>{content.parent}</RightLabel>}
                      {content && <FolderIcon />}
                      <RightLabel $left={content?.parent ? 1 : 0}>{content?.name}</RightLabel>
                    </RightName>
                    <RightSize>{size}</RightSize>
                  </GridRow>
                );
              })}
              <BlackOut />
            </Grid>
            <VScroll>
              <Chevron rotate={0} />
              <VScrollThumb />
              <Chevron rotate={180} />
            </VScroll>
          </GridArea>
          <StatusBar>
            <StatusCell $width={551} />
            <StatusCell $width={189} $pad={28}>Showing 625 of 732 items</StatusCell>
            <StatusFree>
              <FolderIcon />
              72 directories
              <StatusFile>
                <PlainFileIcon />
                553 files (3,99 GB)
              </StatusFile>
            </StatusFree>
          </StatusBar>
          <BottomBar>
            <Gripper $height={38} $after={5} />
            <ListButton><ListBookIcon size={34} /></ListButton>
            <ViewBox>
              <ViewLabel>Select view:</ViewLabel>
              <ViewIcons>
                <ViewIcon><ScanFolderIcon fill="#e8e8e8" glass="#bcbcbc" /></ViewIcon>
                <ViewIcon $green><SyncIcon size={20} dark /></ViewIcon>
              </ViewIcons>
            </ViewBox>
            <CountButton>
              <CountInner>
                <DoubleBars><Bar /><Bar /></DoubleBars>
                <CountValue>107</CountValue>
              </CountInner>
            </CountButton>
            <CountButton $active>
              <CountInner $active>
                <BigPill />
                <CountValue $active>625</CountValue>
              </CountInner>
            </CountButton>
            <CaretButton $width={17}><Caret /></CaretButton>
            <StatsLabel>Statistics:</StatsLabel>
            <StatsBox>
              {STATS.map((stat) => (
                <StatColumn key={stat.kind} $width={stat.width}>
                  <StatIcon kind={stat.kind} />
                  <span>{stat.value}</span>
                </StatColumn>
              ))}
            </StatsBox>
          </BottomBar>
        </Main>
      </Workspace>
      <Base />
    </Page>
  );
}
